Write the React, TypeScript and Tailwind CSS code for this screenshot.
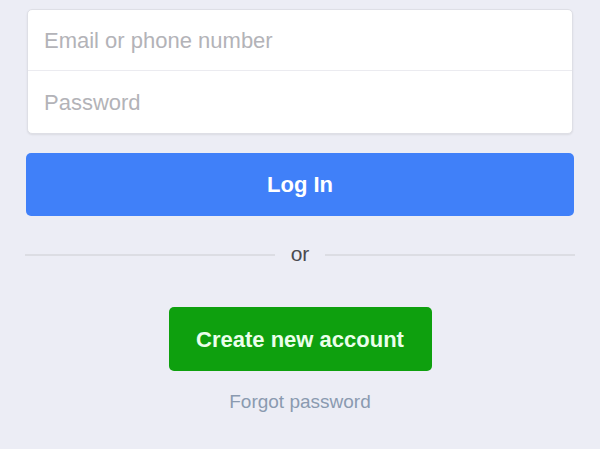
export default function App() {
  return (
    <div
      className="w-[600px] h-[449px] bg-[#ecedf5] overflow-hidden flex flex-col items-center"
      style={{ fontFamily: '"Liberation Sans", Arial, sans-serif' }}
    >
      <div className="mt-[9px] w-[546px] bg-white rounded-[5px] border border-[#dedfe6] shadow-[0_1px_2px_rgba(0,0,0,0.08)] flex flex-col">
        <div className="h-[61px] flex items-center pl-[16px] text-[22px] text-[#b3b3b8] border-b border-[#ebebf0]">
          Email or phone number
        </div>
        <div className="h-[62px] flex items-center pl-[16px] text-[22px] text-[#b3b3b8]">
          Password
        </div>
      </div>
      <div className="mt-[19px] w-[548px] h-[63px] bg-[#4080f9] rounded-[5px] flex items-center justify-center text-white font-bold text-[22px]">
        Log In
      </div>
      <div className="mt-[27px] w-[550px] flex items-center gap-[16px]">
        <div className="flex-1 h-[2px] bg-[#dcdde3]" />
        <span className="text-[21px] text-[#4a4a4f] leading-none pb-[2px]">or</span>
        <div className="flex-1 h-[2px] bg-[#dcdde3]" />
      </div>
      <div className="mt-[41px] w-[263px] h-[64px] bg-[#0ea00e] rounded-[5px] flex items-center justify-center text-[#eaffea] font-bold text-[22px]">
        Create new account
      </div>
      <div className="mt-[17px] text-[19px] text-[#8a9ab0]">Forgot password</div>
    </div>
  );
}
